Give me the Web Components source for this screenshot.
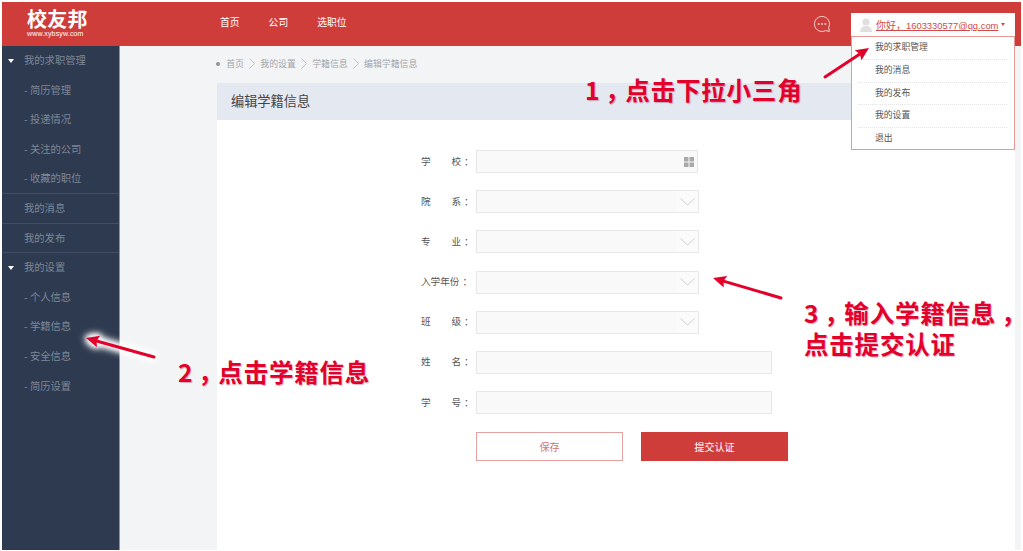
<!DOCTYPE html>
<html lang="zh">
<head>
<meta charset="utf-8">
<title>编辑学籍信息</title>
<style>
  html, body { margin: 0; height: 100%; background: #fff; overflow: hidden; }
  body { font-family: "Noto Sans CJK SC", "Liberation Sans", sans-serif; }
</style>
</head>
<body>
<xy-app>
  <xy-header slot="header"></xy-header>
  <xy-sidebar slot="sidebar">
    <xy-side-item kind="group">我的求职管理</xy-side-item>
    <xy-side-item kind="sub">简历管理</xy-side-item>
    <xy-side-item kind="sub">投递情况</xy-side-item>
    <xy-side-item kind="sub">关注的公司</xy-side-item>
    <xy-side-item kind="sub" divider>收藏的职位</xy-side-item>
    <xy-side-item divider>我的消息</xy-side-item>
    <xy-side-item divider>我的发布</xy-side-item>
    <xy-side-item kind="group">我的设置</xy-side-item>
    <xy-side-item kind="sub">个人信息</xy-side-item>
    <xy-side-item kind="sub">学籍信息</xy-side-item>
    <xy-side-item kind="sub">安全信息</xy-side-item>
    <xy-side-item kind="sub">简历设置</xy-side-item>
  </xy-sidebar>
  <xy-crumbs></xy-crumbs>
  <xy-panel heading="编辑学籍信息">
    <xy-field a="学" b="校" type="grid"></xy-field>
    <xy-field a="院" b="系" type="select"></xy-field>
    <xy-field a="专" b="业" type="select"></xy-field>
    <xy-field label="入学年份" type="select"></xy-field>
    <xy-field a="班" b="级" type="select"></xy-field>
    <xy-field a="姓" b="名" type="text"></xy-field>
    <xy-field a="学" b="号" type="text"></xy-field>
    <xy-actions></xy-actions>
  </xy-panel>
  <xy-notes></xy-notes>
</xy-app>

<script>
  class XyApp extends HTMLElement {
    constructor() {
      super();
      this.attachShadow({ mode: 'open' });
      this.shadowRoot.innerHTML = `
        <style>
          :host { display: block; position: relative; width: 1023px; height: 551px; box-sizing: border-box; padding: 2px 2px 1px 2px; }
          .frame { display: flex; flex-direction: column; height: 100%; }
          .body { flex: 1; display: flex; min-height: 0; background: #f3f4f6; }
          .main { flex: 1; display: flex; flex-direction: column; padding-left: 97px; min-width: 0; }
        </style>
        <div class="frame">
          <slot name="header"></slot>
          <div class="body">
            <slot name="sidebar"></slot>
            <div class="main"><slot></slot></div>
          </div>
        </div>
      `;
    }
  }

  class XyHeader extends HTMLElement {
    constructor() {
      super();
      this.attachShadow({ mode: 'open' });
      this.shadowRoot.innerHTML = `
        <style>
          :host { display: flex; align-items: center; height: 44px; background: #cf3d3b; color: #fff; position: relative; }
          .logo { width: 218px; box-sizing: border-box; padding: 0 0 2px 25px; display: flex; flex-direction: column; align-items: flex-start; }
          .logo b { font-size: 20px; line-height: 20px; letter-spacing: 0.2px; font-weight: 700; }
          .logo small { font: 400 7px/8px "Liberation Sans", sans-serif; letter-spacing: 0.15px; margin-top: 1px; }
          nav { display: flex; gap: 29px; font-size: 9.8px; flex: 1; margin-top: -4px; }
          .chat { margin: 0 20px 0 0; display: block; }
          .user { width: 164px; height: 23px; margin: 1px 6px 0 0; background: #fff; box-sizing: border-box; display: flex; align-items: center; padding-left: 9px; font-size: 10px; color: #cf4a48; position: relative; }
          .user svg { margin-right: 4px; }
          .user u { white-space: nowrap; }
          .user u span { font: 9.4px "Liberation Sans", sans-serif; }
          .user i { width: 0; height: 0; border: 2.5px solid transparent; border-top: 3px solid #cf4a48; border-bottom: 0; margin-left: 3px; }
          .menu { position: absolute; left: 0; top: 23px; width: 164px; height: 114px; box-sizing: border-box; background: #fff; border: 1px solid #e39a98; padding: 0 7px; color: #555; }
          .menu div { height: 22.8px; line-height: 19.5px; padding-left: 16px; border-bottom: 1px dotted #e4e4e4; box-sizing: border-box; font-size: 8.8px; }
          .menu div:last-child { border-bottom: 0; }
        </style>
        <div class="logo"><b>校友邦</b><small>www.xybsyw.com</small></div>
        <nav><span>首页</span><span>公司</span><span>选职位</span></nav>
        <svg class="chat" width="18" height="18" viewBox="0 0 18 18" fill="none" stroke="#f5d5d4" stroke-width="1">
          <path d="M12.5 15.6A7.5 7.5 0 1 1 15.6 12.5L16.4 16.4Z"/>
          <g fill="#f5d5d4" stroke="none"><circle cx="5.6" cy="9" r="1"/><circle cx="9" cy="9" r="1"/><circle cx="12.4" cy="9" r="1"/></g>
        </svg>
        <div class="user">
          <svg width="12" height="14" viewBox="0 0 12 14" fill="#e0e0e0"><circle cx="6" cy="4" r="3.6"/><path d="M0 14C0.500 9 3 8 6 8s5.500 1 6 6Z"/></svg>
          <u>你好，<span>1603330577@qq.com</span></u><i></i>
          <div class="menu">
            <div>我的求职管理</div><div>我的消息</div><div>我的发布</div><div>我的设置</div><div>退出</div>
          </div>
        </div>
      `;
    }
  }

  class XySidebar extends HTMLElement {
    constructor() {
      super();
      this.attachShadow({ mode: 'open' });
      this.shadowRoot.innerHTML = `
        <style>
          :host { display: block; width: 117px; flex: none; background: #2e3a50; border-right: 1px solid #8d939e; box-sizing: content-box; }
        </style>
        <slot></slot>
      `;
    }
  }

  class XySideItem extends HTMLElement {
    constructor() {
      super();
      this.attachShadow({ mode: 'open' });
      const kind = this.getAttribute('kind');
      const mark = kind === 'group' ? '<i></i>' : '';
      const dash = kind === 'sub' ? '- ' : '';
      this.shadowRoot.innerHTML = `
        <style>
          :host { display: block; height: 29.6px; box-sizing: border-box; line-height: 28px; padding-left: 22px; position: relative; font-size: 10.3px; color: #7f8897; }
          :host([divider]) { border-bottom: 1px solid #414d63; }
          i { position: absolute; left: 6px; top: 13px; width: 0; height: 0; border: 3px solid transparent; border-top: 4px solid #fff; border-bottom: 0; }
        </style>
        ${mark}${dash}<slot></slot>
      `;
    }
  }

  class XyCrumbs extends HTMLElement {
    constructor() {
      super();
      this.attachShadow({ mode: 'open' });
      const sep = '<svg width="6" height="11" viewBox="0 0 6 11" fill="none" stroke="#b5b8bd" stroke-width="0.8"><path d="M0.5 0.5 5.5 5.500 0.5 10.5"/></svg>';
      this.shadowRoot.innerHTML = `
        <style>
          :host { display: flex; align-items: center; height: 37px; box-sizing: border-box; padding-bottom: 2px; font-size: 8.9px; color: #a3a6ab; gap: 5.2px; margin-left: -1px; }
          b { width: 4px; height: 4px; border-radius: 50%; background: #8f9399; margin-right: 1px; }
        </style>
        <b></b><span>首页</span>${sep}<span>我的设置</span>${sep}<span>学籍信息</span>${sep}<span>编辑学籍信息</span>
      `;
    }
  }

  class XyPanel extends HTMLElement {
    constructor() {
      super();
      this.attachShadow({ mode: 'open' });
      this.shadowRoot.innerHTML = `
        <style>
          :host { display: block; flex: 1; background: #fff; width: 798px; margin-right: 6px; }
          h2 { margin: 0; height: 37px; background: #e4e8f0; font-size: 13.2px; font-weight: 400; line-height: 35px; padding-left: 14px; color: #444; }
          .form { padding: 30px 0 0 204px; display: flex; flex-direction: column; gap: 17.2px; }
        </style>
        <h2>${this.getAttribute('heading')}</h2>
        <div class="form"><slot></slot></div>
      `;
    }
  }

  class XyField extends HTMLElement {
    constructor() {
      super();
      this.attachShadow({ mode: 'open' });
      const type = this.getAttribute('type');
      const label = this.hasAttribute('label')
        ? `<span>${this.getAttribute('label')}</span><span class="co">：</span>`
        : `<span class="sp"><span>${this.getAttribute('a')}</span><span>${this.getAttribute('b')}</span></span><span class="co">：</span>`;
      let tail = '';
      if (type === 'grid') {
        tail = '<svg class="g" width="10" height="10" viewBox="0 0 10 10" fill="#a9a9a9"><rect width="4.5" height="4.5"/><rect x="5.5" width="4.5" height="4.5"/><rect y="5.5" width="4.5" height="4.5"/><rect x="5.5" y="5.5" width="4.5" height="4.5"/></svg>';
      } else if (type === 'select') {
        tail = '<div class="c"><svg width="15" height="8" viewBox="0 0 15 8" fill="none" stroke="#cfcfcf" stroke-width="1"><path d="M0.5 0.5 7.5 7 14.5 0.5"/></svg></div>';
      }
      this.shadowRoot.innerHTML = `
        <style>
          :host { display: flex; align-items: center; font-size: 9.6px; color: #555; height: 23px; }
          .l { width: 55px; display: flex; align-items: center; white-space: nowrap; margin-top: -2px; }
          .sp { width: 40px; display: flex; justify-content: space-between; }
          .co { padding-left: 3px; font-feature-settings: "halt"; }
          .box { box-sizing: border-box; height: 23px; border: 1px solid #e8e8e8; background: #f9f9f9; display: flex; justify-content: flex-end; align-items: center; position: relative; flex: none; }
          .w1 { width: 222px; }
          .w2 { width: 223px; }
          .w3 { width: 296px; }
          .g { margin-right: 3px; }
          .c { align-self: stretch; width: 22px; background: #fbfbfb; display: flex; align-items: center; justify-content: center; }
        </style>
        <div class="l">${label}</div>
        <div class="box ${type === 'grid' ? 'w1' : type === 'select' ? 'w2' : 'w3'}">${tail}</div>
      `;
    }
  }

  class XyActions extends HTMLElement {
    constructor() {
      super();
      this.attachShadow({ mode: 'open' });
      this.shadowRoot.innerHTML = `
        <style>
          :host { display: flex; gap: 18px; margin: 0.6px 0 0 55px; }
          button { width: 147px; height: 29px; box-sizing: border-box; font: 10px "Noto Sans CJK SC", sans-serif; border-radius: 0; padding: 0; }
          .s { background: #fff; border: 1px solid #e6a09f; color: #d9706e; }
          .p { background: #cf3d3b; border: 1px solid #cf3d3b; color: #fff; }
        </style>
        <button class="s">保存</button><button class="p">提交认证</button>
      `;
    }
  }

  // red hand-drawn notes on top of the screenshot
  class XyNotes extends HTMLElement {
    constructor() {
      super();
      this.attachShadow({ mode: 'open' });
      const arrow = (x1, y1, x2, y2) => {
        const a = Math.atan2(y2 - y1, x2 - x1);
        const p = (d, s) => [x2 - d * Math.cos(a) + s * Math.sin(a), y2 - d * Math.sin(a) - s * Math.cos(a)].join(' ');
        return `<path d="M${x1} ${y1}L${p(10, 0)}" stroke-width="3"/><path d="M${x2} ${y2}L${p(13, 6)}L${p(11, 0)}L${p(13, -6)}Z" stroke="none"/>`;
      };
      const comma = '<span class="c">，</span>';
      this.shadowRoot.innerHTML = `
        <style>
          :host { position: absolute; inset: 0; display: block; pointer-events: none; }
          svg { position: absolute; left: 0; top: 0; }
          .t { position: absolute; font-size: 24.5px; line-height: 31px; font-weight: 700; color: #e3002b; white-space: nowrap; letter-spacing: 0.8px; text-shadow: 1px 1px 1px rgba(120,0,60,.3); }
          .c { font-feature-settings: "halt"; padding: 0 7px 0 5px; }
          .glow { filter: drop-shadow(0 0 3px #fff) drop-shadow(0 0 3px #fff) drop-shadow(0 0 2px #fff); }
        </style>
        <svg width="1023" height="551" fill="#e3002b" stroke="#e3002b" stroke-linecap="round">
          ${arrow(825, 77, 869, 48)}
          <g class="glow">${arrow(154, 357, 86, 338)}</g>
          ${arrow(781, 298, 713, 278)}
        </svg>
        <div class="t" style="left:585px;top:74px">1${comma}点击下拉小三角</div>
        <div class="t" style="left:178px;top:356px">2${comma}点击学籍信息</div>
        <div class="t" style="left:804px;top:297px">3${comma}输入学籍信息${comma}<br>点击提交认证</div>
      `;
    }
  }

  customElements.define('xy-app', XyApp);
  customElements.define('xy-header', XyHeader);
  customElements.define('xy-sidebar', XySidebar);
  customElements.define('xy-side-item', XySideItem);
  customElements.define('xy-crumbs', XyCrumbs);
  customElements.define('xy-panel', XyPanel);
  customElements.define('xy-field', XyField);
  customElements.define('xy-actions', XyActions);
  customElements.define('xy-notes', XyNotes);
</script>
</body>
</html>
